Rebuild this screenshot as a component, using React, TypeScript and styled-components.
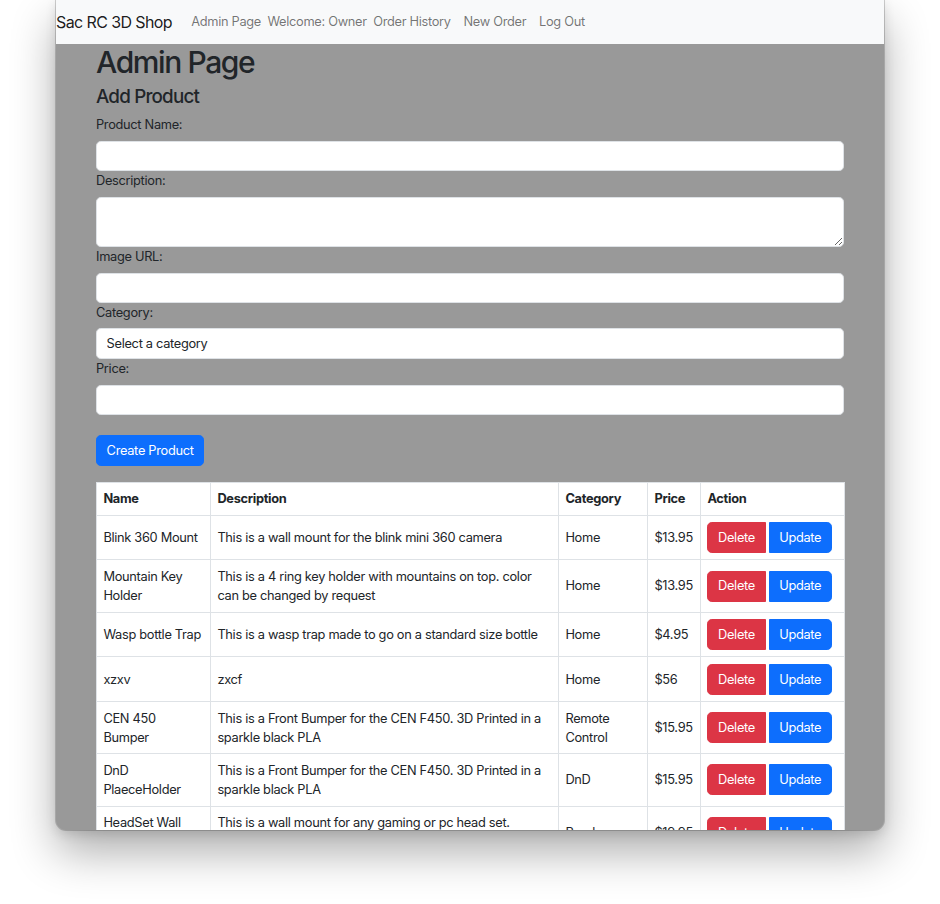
import React from "react";
import styled, { createGlobalStyle } from "styled-components";

const GlobalStyle = createGlobalStyle`
  html, body {
    margin: 0;
    padding: 0;
    background: #ffffff;
  }
  body {
    font-family: Inter, "Noto Sans", Roboto, sans-serif;
    font-size: 12.8px;
    line-height: 1.5;
    letter-spacing: -0.3px;
    color: #212529;
  }
  * { box-sizing: border-box; }
`;

const Stage = styled.div`
  width: 940px;
  height: 904px;
  padding-left: 56px;
  overflow: hidden;
`;

const Window = styled.div`
  width: 828px;
  height: 830px;
  background: #999999;
  border-radius: 0 0 10px 10px;
  overflow: hidden;
  box-shadow: 0 0 0 1px rgba(0, 0, 0, 0.18), 0 22px 45px rgba(0, 0, 0, 0.32),
    0 4px 12px rgba(0, 0, 0, 0.12);
`;

const NavBar = styled.nav`
  height: 44px;
  background: #f8f9fa;
  display: flex;
  align-items: center;
`;

const Brand = styled.span`
  font-size: 16px;
  line-height: 1.5;
  letter-spacing: -0.6px;
  color: rgba(0, 0, 0, 0.9);
  margin-right: 12.8px;
`;

const NavLink = styled.span<{ $plain?: boolean }>`
  font-size: 12.8px;
  color: rgba(0, 0, 0, 0.55);
  padding: 0 ${(p) => (p.$plain ? "0" : "6.4px")};
`;

const Container = styled.main`
  padding: 0 40px;
`;

const Title = styled.h1`
  margin: 0 0 6.4px;
  font-size: 30px;
  font-weight: 500;
  line-height: 1.2;
  letter-spacing: -1.4px;
`;

const SubTitle = styled.h4`
  margin: 0 0 6.4px;
  font-size: 18.8px;
  font-weight: 500;
  line-height: 1.2;
  letter-spacing: -0.8px;
`;

const Form = styled.form`
  display: flex;
  flex-direction: column;
`;

const Label = styled.label`
  display: block;
  margin-bottom: 6.4px;
  font-size: 12.8px;
  line-height: 19.2px;
`;

const fieldCss = `
  display: block;
  width: 100%;
  padding: 4.8px 9.6px;
  font-family: inherit;
  font-size: 12.8px;
  line-height: 19.2px;
  letter-spacing: -0.3px;
  color: #212529;
  background: #ffffff;
  border: 1px solid #dee2e6;
  border-radius: 4.8px;
  outline: none;
  appearance: none;
`;

const Input = styled.input`
  ${fieldCss}
  height: 30.4px;
`;

const TextArea = styled.textarea`
  ${fieldCss}
  height: 50px;
  resize: vertical;
`;

const Select = styled.select`
  ${fieldCss}
  height: 31px;
`;

const Btn = styled.button<{ $variant: "primary" | "danger"; $side?: "left" | "right" }>`
  font-family: inherit;
  font-size: 12.8px;
  line-height: 19.2px;
  letter-spacing: -0.3px;
  padding: 4.8px 9.6px;
  height: 31px;
  border: 1px solid ${(p) => (p.$variant === "primary" ? "#0d6efd" : "#dc3545")};
  background: ${(p) => (p.$variant === "primary" ? "#0d6efd" : "#dc3545")};
  color: #ffffff;
  border-radius: ${(p) =>
    p.$side === "left" ? "4.8px 0 0 4.8px" : p.$side === "right" ? "0 4.8px 4.8px 0" : "4.8px"};
  cursor: pointer;
`;

const SubmitRow = styled.div`
  margin-top: 19.2px;
  margin-bottom: 16px;
`;

const Table = styled.table`
  width: 100%;
  border-collapse: collapse;
  table-layout: fixed;
  background: #ffffff;
`;

const Th = styled.th`
  text-align: left;
  font-weight: 700;
  padding: 6.4px;
  border: 1px solid #dee2e6;
  vertical-align: middle;
  line-height: 19.2px;
`;

const Td = styled.td`
  padding: 6.4px;
  border: 1px solid #dee2e6;
  vertical-align: middle;
  line-height: 19.2px;
`;

const ActionGroup = styled.div`
  display: flex;
  gap: 3px;
`;

type Product = { name: string; description: string; category: string; price: string };

const products: Product[] = [
  { name: "Blink 360 Mount", description: "This is a wall mount for the blink mini 360 camera", category: "Home", price: "$13.95" },
  { name: "Mountain Key Holder", description: "This is a 4 ring key holder with mountains on top. color can be changed by request", category: "Home", price: "$13.95" },
  { name: "Wasp bottle Trap", description: "This is a wasp trap made to go on a standard size bottle", category: "Home", price: "$4.95" },
  { name: "xzxv", description: "zxcf", category: "Home", price: "$56" },
  { name: "CEN 450 Bumper", description: "This is a Front Bumper for the CEN F450. 3D Printed in a sparkle black PLA", category: "Remote Control", price: "$15.95" },
  { name: "DnD PlaeceHolder", description: "This is a Front Bumper for the CEN F450. 3D Printed in a sparkle black PLA", category: "DnD", price: "$15.95" },
  { name: "HeadSet Wall Mount", description: "This is a wall mount for any gaming or pc head set. Printed in black PLA", category: "Random", price: "$19.95" },
];

export default function App() {
  return (
    <>
      <GlobalStyle />
      <Stage>
        <Window>
          <NavBar>
            <Brand>Sac RC 3D Shop</Brand>
            <NavLink>Admin Page</NavLink>
            <NavLink $plain>Welcome: Owner</NavLink>
            <NavLink>Order History</NavLink>
            <NavLink>New Order</NavLink>
            <NavLink>Log Out</NavLink>
          </NavBar>
          <Container>
            <Title>Admin Page</Title>
            <SubTitle>Add Product</SubTitle>
            <Form onSubmit={(e) => e.preventDefault()}>
              <Label>Product Name:</Label>
              <Input type="text" />
              <Label>Description:</Label>
              <TextArea />
              <Label>Image URL:</Label>
              <Input type="text" />
              <Label>Category:</Label>
              <Select defaultValue="">
                <option value="">Select a category</option>
                <option value="home">Home</option>
                <option value="rc">Remote Control</option>
                <option value="dnd">DnD</option>
                <option value="random">Random</option>
              </Select>
              <Label>Price:</Label>
              <Input type="text" />
              <SubmitRow>
                <Btn type="submit" $variant="primary">Create Product</Btn>
              </SubmitRow>
            </Form>
            <Table>
              <colgroup>
                <col style={{ width: 114 }} />
                <col style={{ width: 348 }} />
                <col style={{ width: 89 }} />
                <col style={{ width: 53 }} />
                <col style={{ width: 144 }} />
              </colgroup>
              <thead>
                <tr>
                  <Th>Name</Th>
                  <Th>Description</Th>
                  <Th>Category</Th>
                  <Th>Price</Th>
                  <Th>Action</Th>
                </tr>
              </thead>
              <tbody>
                {products.map((p, i) => (
                  <tr key={i}>
                    <Td>{p.name}</Td>
                    <Td>{p.description}</Td>
                    <Td>{p.category}</Td>
                    <Td>{p.price}</Td>
                    <Td>
                      <ActionGroup>
                        <Btn $variant="danger" $side="left">Delete</Btn>
                        <Btn $variant="primary" $side="right">Update</Btn>
                      </ActionGroup>
                    </Td>
                  </tr>
                ))}
              </tbody>
            </Table>
          </Container>
        </Window>
      </Stage>
    </>
  );
}
